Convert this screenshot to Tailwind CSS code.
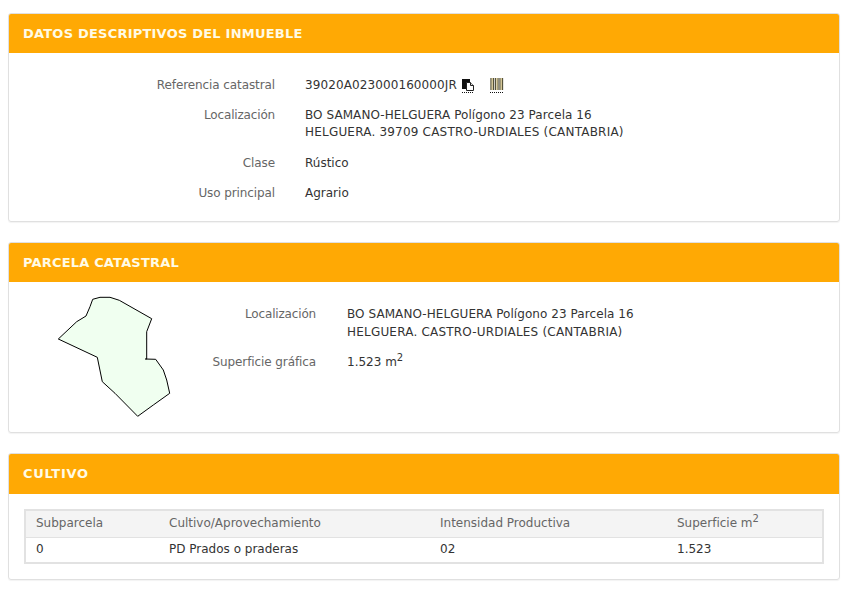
<!DOCTYPE html>
<html lang="es">
<head>
<meta charset="utf-8">
<script src="https://cdn.jsdelivr.net/npm/@tailwindcss/browser@4"></script>
</head>
<body class="bg-white font-['DejaVu_Sans',Verdana,sans-serif] text-[12px] leading-[17px] text-[#333]">
<main class="w-[855px] h-[591px] overflow-hidden pl-2 pr-[15px] pt-[13px] flex flex-col">

  <section class="h-[209px] rounded-[3px] border border-[#e0e0e0] shadow-[0_1px_1px_rgba(0,0,0,0.05)] overflow-hidden">
    <h2 class="h-[39px] bg-[#ffa904] text-[#fffbe6] font-bold px-[14px] flex items-center text-[13px] tracking-[0.22px]">DATOS DESCRIPTIVOS DEL INMUEBLE</h2>
    <div class="pt-[24px] grid grid-cols-[266px_1fr] gap-x-[30px] gap-y-[13px]">
      <div class="text-right text-[#666] tracking-[-0.1px]">Referencia catastral</div>
      <div class="flex items-center">
        <span class="tracking-[0.1px]">39020A023000160000JR</span>
        <svg class="ml-[4px]" width="14" height="15" viewBox="0 0 14 15"><path d="M1 1h8v10H1z" fill="#111"/><path d="M5.500 4.500h4l3 3v5h-7z" fill="#fff" stroke="#222"/><path d="M9.500 4.500v3h3" fill="#ddd" stroke="#222"/><path d="M1 14.500h11" stroke="#111" stroke-dasharray="1 1"/></svg>
        <svg class="ml-[15px]" width="14" height="15" viewBox="0 0 14 15"><path d="M1 0v12M3.500 0v12M5.500 0v12M8 0v12M10 0v12M12.500 0v12" stroke="#55523a" stroke-width="1.300"/><path d="M2.200 0v12M7 0v12M11.200 0v12" stroke="#c9b36a" stroke-width="0.900"/><path d="M0 14.500h13" stroke="#111" stroke-dasharray="1 1"/></svg>
      </div>
      <div class="text-right text-[#666] tracking-[-0.17px]">Localización</div>
      <div class="pb-px"><span class="tracking-[0.07px]">BO SAMANO-HELGUERA Polígono 23 Parcela 16</span><br><span class="tracking-[0.2px]">HELGUERA. 39709 CASTRO-URDIALES (CANTABRIA)</span></div>
      <div class="text-right text-[#666] tracking-[-0.1px]">Clase</div>
      <div>Rústico</div>
      <div class="text-right text-[#666] tracking-[-0.1px]">Uso principal</div>
      <div>Agrario</div>
    </div>
  </section>

  <section class="mt-5 h-[191px] rounded-[3px] border border-[#e0e0e0] shadow-[0_1px_1px_rgba(0,0,0,0.05)] overflow-hidden">
    <h2 class="h-[39px] bg-[#ffa904] text-[#fffbe6] font-bold px-[14px] flex items-center text-[13px] tracking-[0.18px]">PARCELA CATASTRAL</h2>
    <div class="flex">
      <svg class="shrink-0" width="162" height="140" viewBox="9 282 162 140">
        <path d="M92.700 299.300L100 297.300L110 297.300L119.300 300.300L151.700 318.700L146.700 331.700V359L145.300 359L155.700 359.300L163.300 370L166.700 380L169.700 393.300L153.300 405L137.700 416.300L115 393.300L102.300 381.700L97.300 357.300L58.300 339L76.700 321.700L86 316L90 306.700Z" fill="#f0fff0" stroke="#000" stroke-width="1"/>
      </svg>
      <div class="pt-[23px] ml-[-3px] grid grid-cols-[148px_1fr] gap-x-[31px] gap-y-[13px] content-start">
        <div class="pt-px text-right text-[#666] tracking-[-0.17px]">Localización</div>
        <div class="leading-[18px]"><span class="tracking-[0.07px]">BO SAMANO-HELGUERA Polígono 23 Parcela 16</span><br><span class="tracking-[0.2px]">HELGUERA. CASTRO-URDIALES (CANTABRIA)</span></div>
        <div class="text-right text-[#666] tracking-[-0.1px]">Superficie gráfica</div>
        <div>1.523 m<sup class="text-[10px] leading-none">2</sup></div>
      </div>
    </div>
  </section>

  <section class="mt-5 h-[127px] rounded-[3px] border border-[#e0e0e0] shadow-[0_1px_1px_rgba(0,0,0,0.05)] overflow-hidden">
    <h2 class="h-[40px] bg-[#ffa904] text-[#fffbe6] font-bold px-[14px] pb-px flex items-center text-[13px] tracking-[0.7px]">CULTIVO</h2>
    <div class="pt-[15px] px-[15px]">
      <table class="w-[800px] table-fixed border-2 border-[#e2e2e2] border-collapse">
        <colgroup><col class="w-[144px]"><col class="w-[271px]"><col class="w-[237px]"><col></colgroup>
        <thead>
          <tr class="h-[27px] bg-[#f4f4f4] text-[#666] border-b border-[#e2e2e2]">
            <th class="font-normal text-left pl-[10px]">Subparcela</th>
            <th class="font-normal text-left">Cultivo/Aprovechamiento</th>
            <th class="font-normal text-left">Intensidad Productiva</th>
            <th class="font-normal text-left">Superficie m<sup class="text-[10px] leading-none">2</sup></th>
          </tr>
        </thead>
        <tbody>
          <tr class="h-[26px]">
            <td class="pl-[10px]">0</td>
            <td>PD Prados o praderas</td>
            <td>02</td>
            <td>1.523</td>
          </tr>
        </tbody>
      </table>
    </div>
  </section>
</main>
</body>
</html>
